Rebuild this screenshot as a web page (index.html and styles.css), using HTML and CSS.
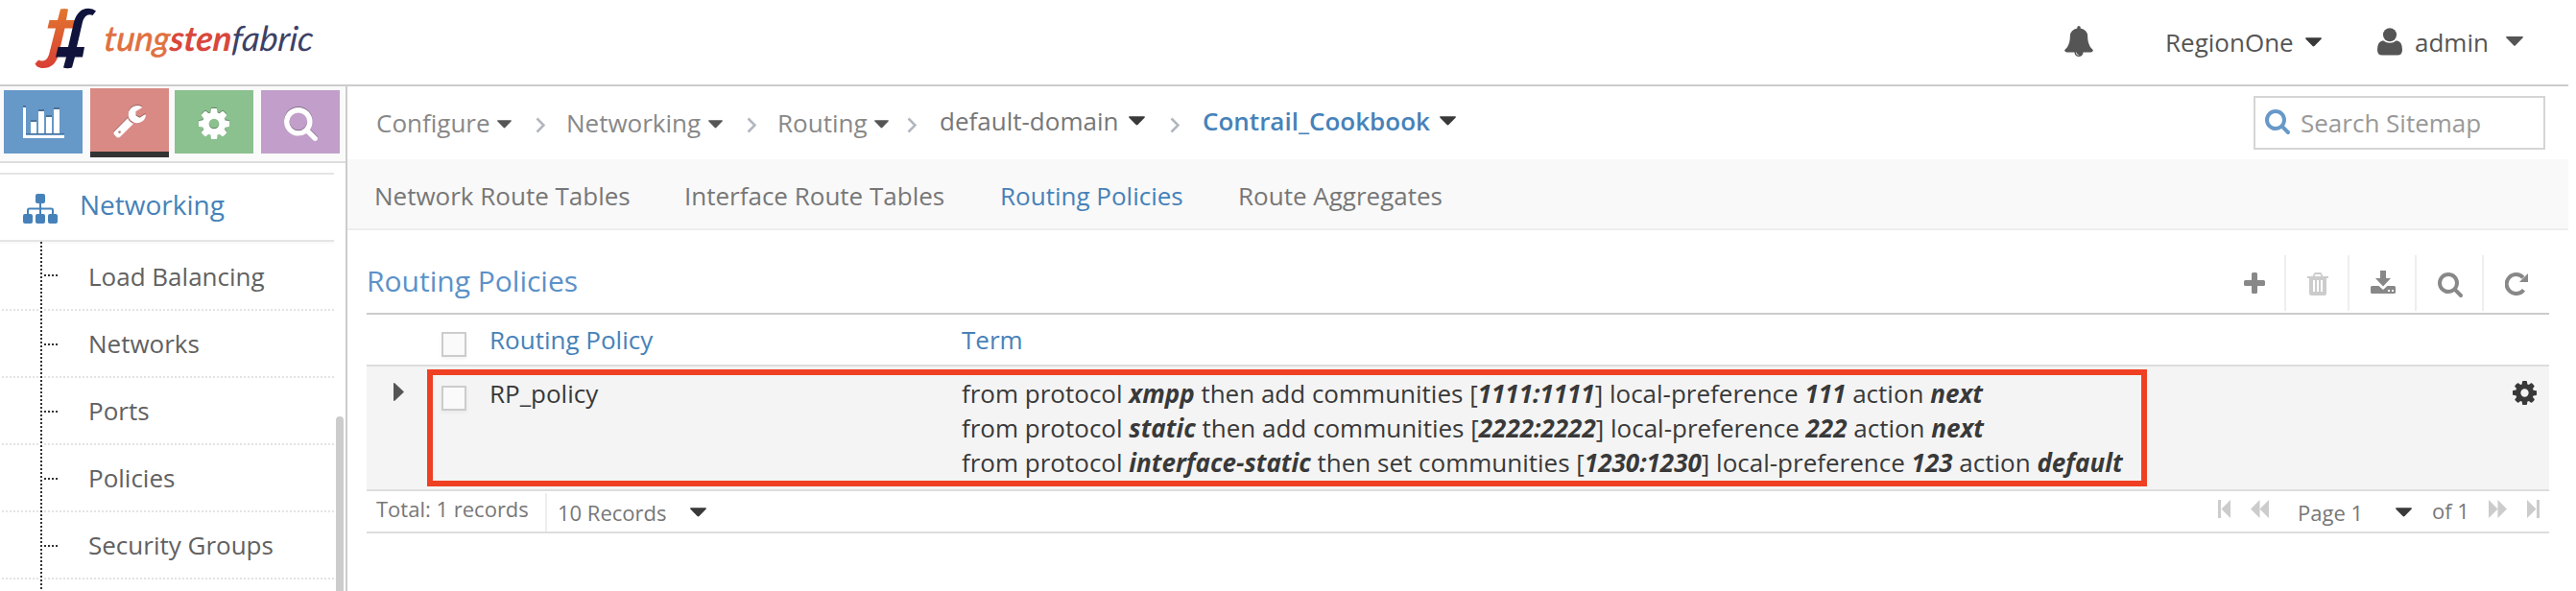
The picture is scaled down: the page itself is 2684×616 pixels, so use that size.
FILE: index.html
```html
<!DOCTYPE html>
<html lang="en">
<head>
<meta charset="utf-8">
<title>Routing Policies</title>
<link rel="stylesheet" href="styles.css">
</head>
<body>
<svg class="defs" width="0" height="0">
  <symbol id="cog" viewBox="128 128 1536 1536"><path d="M1152 896q0-106-75-181t-181-75-181 75-75 181 75 181 181 75 181-75 75-181zm512-109v222q0 12-8 23t-20 13l-185 28q-19 54-39 91 35 50 107 138 10 12 10 25t-9 23q-27 37-99 108t-94 71q-12 0-26-9l-138-108q-44 23-91 38-16 136-29 186-7 28-36 28h-222q-14 0-24.500-8.500t-11.500-21.500l-28-184q-49-16-90-37l-141 107q-10 9-25 9-14 0-25-11-126-114-165-168-7-10-7-23 0-12 8-23 15-21 51-66.500t54-70.500q-27-50-41-99l-183-27q-13-2-21-12.500t-8-23.500v-222q0-12 8-23t19-13l186-28q14-46 39-92-40-57-107-138-10-12-10-24 0-10 9-23 26-36 98.500-107.500t94.500-71.500q13 0 26 10l138 107q44-23 91-38 16-136 29-186 7-28 36-28h222q14 0 24.500 8.500t11.500 21.500l28 184q49 16 90 37l142-107q9-9 24-9 13 0 25 10 129 119 165 170 7 8 7 22 0 12-8 23-15 21-51 66.500t-54 70.500q26 50 41 98l183 28q13 2 21 12.500t8 23.500z"/></symbol>
  <symbol id="search" viewBox="64 128 1664 1664"><path d="M1216 832q0-185-131.500-316.500t-316.500-131.500-316.500 131.500-131.500 316.500 131.500 316.500 316.500 131.500 316.500-131.500 131.500-316.500zm512 832q0 52-38 90t-90 38q-54 0-90-38l-343-342q-179 124-399 124-143 0-273.500-55.500t-225-150-150-225-55.500-273.500 55.500-273.500 150-225 225-150 273.500-55.500 273.500 55.500 225 150 150 225 55.500 273.500q0 220-124 399l343 343q37 37 37 90z"/></symbol>
  <symbol id="wrench" viewBox="64 128 1664 1664"><path d="M448 1472q0-26-19-45t-45-19-45 19-19 45 19 45 45 19 45-19 19-45zm644-420l-682 682q-37 37-90 37-52 0-91-37l-106-108q-38-36-38-90 0-53 38-91l681-681q39 98 114.500 173.500t173.500 114.500zm634-435q0 39-23 106-47 134-164.500 217.500t-258.500 83.500q-185 0-316.500-131.500t-131.500-316.500 131.500-316.500 316.500-131.500q58 0 121.500 16.500t107.500 46.500q16 11 16 28t-16 28l-293 169v224l193 107q5-3 79-48.500t135.500-81 70.500-35.500q15 0 23.500 10t8.500 25z"/></symbol>
  <symbol id="bell" viewBox="64 0 1664 1792"><path d="M912 1696q0-16-16-16-59 0-101.500-42.500t-42.500-101.500q0-16-16-16t-16 16q0 73 51.500 124.500t124.500 51.500q16 0 16-16zm816-288q0 52-38 90t-90 38h-448q0 106-75 181t-181 75-181-75-75-181h-448q-52 0-90-38t-38-90q50-42 91-88t85-119.500 74.500-158.500 50-206 19.500-260q0-152 117-282.500t307-158.500q-8-19-8-39 0-40 28-68t68-28 68 28 28 68q0 20-8 39 190 28 307 158.500t117 282.500q0 139 19.500 260t50 206 74.500 158.500 85 119.500 91 88z"/></symbol>
  <symbol id="caret" viewBox="0 0 18 10"><path d="M.8 0H17.200Q18.400.4 17.500 1.500L10 9.300Q9 10.300 8 9.300L.5 1.500Q-.4.400.8 0z"/></symbol>
  <symbol id="chev" viewBox="0 0 10 17"><path d="M1.500 1.500L8.500 8.500L1.500 15.500" fill="none" stroke="#b2b6bf" stroke-width="2.600"/></symbol>
</svg>

<header class="topbar">
  <div class="logo">
    <svg class="mark" viewBox="0 0 66 66" width="66" height="66">
      <defs><linearGradient id="flame" x1="0" y1="0" x2="0" y2="1"><stop offset="0" stop-color="#e2762f"/><stop offset="1" stop-color="#d83f34"/></linearGradient></defs>
      <path fill="url(#flame)" d="M27 1.500Q31 .5 35 1.500L33 13H43L40.500 21.500H31.500L25 49Q21 64 7 63Q2 62 .5 58.500L4 54.500Q12 58 15 49L22 21.500H13.500L15.500 13H24z"/>
      <path fill="#10143c" d="M64 3.500L60.500 8Q53 5 50 15L44 41H52L50 51.500H42L39 62.500Q34 64 30 62.500L33 51.500H22L24.500 41H35L41 15Q45 1 56 .8Q61 1 64 3.500z"/>
    </svg>
    <span class="word"><span class="word-a">tung</span><span class="word-b">sten</span><span class="word-c">fabric</span></span>
  </div>
  <div class="account">
    <svg class="bell" width="30" height="32"><use href="#bell"/></svg>
    <span class="region">RegionOne</span><svg class="caret dark region-caret" width="17" height="10"><use href="#caret"/></svg>
    <svg class="user" viewBox="0 0 26 29" width="26" height="29"><circle cx="13" cy="7.300" r="7"/><path d="M6 13.200Q13 18.500 20 13.200Q26 14 26 23Q26 28.500 21 28.500H5Q0 28.500 0 23Q0 14 6 13.200z"/></svg>
    <span class="admin">admin</span><svg class="caret admin-caret" width="18" height="10"><use href="#caret"/></svg>
  </div>
</header>

<div class="shell">
  <aside class="sidebar">
    <div class="shortcuts">
      <a class="tile blue"><svg viewBox="0 0 43 34" width="43" height="34"><path class="under" d="M0 0H3V29H43V30H0zM8 15h6v3H8zM16 4h6v3h-6zM24 10h6v3h-6zM32 2h6v3h-6z"/><path d="M0 2H3V31H43V34H0zM8 17h6V29H8zM16 6h6V29h-6zM24 12h6V29h-6zM32 4h6V29h-6z"/></svg></a>
      <a class="tile red"><svg width="34" height="34"><use href="#wrench"/></svg></a>
      <a class="tile green"><svg width="32" height="32"><use href="#cog"/></svg></a>
      <a class="tile purple"><svg width="35" height="35"><use href="#search"/></svg></a>
    </div>
    <div class="section">
      <svg viewBox="0 0 36 31" width="36" height="31"><rect x="13" y="0" width="10" height="10" rx="2"/><rect x="0" y="21" width="10" height="10" rx="2"/><rect x="13" y="21" width="10" height="10" rx="2"/><rect x="26" y="21" width="10" height="10" rx="2"/><path d="M18 9V22M5 22V17Q5 15.500 6.500 15.500H29.500Q31 15.500 31 17V22" fill="none" stroke="#4682b9" stroke-width="2"/></svg>
      <span>Networking</span>
    </div>
    <ul class="menu">
      <li>Load Balancing</li><li>Networks</li><li>Ports</li><li>Policies</li><li>Security Groups</li>
    </ul>
    <div class="thumb"></div>
  </aside>

  <main class="main">
    <div class="crumbs">
      <span class="crumb c1">Configure</span><svg class="caret k1" width="15" height="9"><use href="#caret"/></svg><svg class="chev v1" width="10" height="17"><use href="#chev"/></svg>
      <span class="crumb c2">Networking</span><svg class="caret k1" width="15" height="9"><use href="#caret"/></svg><svg class="chev v1" width="10" height="17"><use href="#chev"/></svg>
      <span class="crumb c3">Routing</span><svg class="caret k1" width="15" height="9"><use href="#caret"/></svg><svg class="chev v3" width="10" height="17"><use href="#chev"/></svg>
      <span class="crumb up c4">default-domain</span><svg class="caret dark k4" width="17" height="10"><use href="#caret"/></svg><svg class="chev v4" width="10" height="17"><use href="#chev"/></svg>
      <span class="crumb up strong c5">Contrail_Cookbook</span><svg class="caret dark k4" width="17" height="10"><use href="#caret"/></svg>
      <div class="finder"><svg width="26" height="26"><use href="#search"/></svg><span>Search Sitemap</span></div>
    </div>
    <nav class="tabs">
      <a class="t1">Network Route Tables</a><a class="t2">Interface Route Tables</a><a class="t3 on">Routing Policies</a><a class="t4">Route Aggregates</a>
    </nav>
    <section class="grid">
      <div class="titlebar">
        <h1>Routing Policies</h1>
        <div class="tools">
          <span class="tool w1"><svg viewBox="0 0 22 22" width="22" height="22"><path d="M9.500 0h3a1.500 1.500 0 0 1 1.500 1.500V8h6.500A1.500 1.500 0 0 1 22 9.500v3a1.500 1.500 0 0 1-1.500 1.500H14v6.500a1.500 1.500 0 0 1-1.500 1.500h-3A1.500 1.500 0 0 1 8 20.500V14H1.500A1.500 1.500 0 0 1 0 12.500v-3A1.500 1.500 0 0 1 1.500 8H8V1.500A1.500 1.500 0 0 1 9.500 0z"/></svg></span>
          <span class="tool w2"><svg class="off" viewBox="0 0 22 24" width="22" height="24"><path fill-rule="evenodd" d="M0 4H5.500L7 1Q7.500 0 8.500 0H13.500Q14.500 0 15 1L16.500 4H22V6H20V21.500Q20 24 17.500 24H4.500Q2 24 2 21.500V6H0zM7.500 4H14.500L13.500 2H8.500zM6 8V20H8V8zM10 8V20H12V8zM14 8V20H16V8z"/></svg></span>
          <span class="tool w3"><svg viewBox="0 0 26 24" width="26" height="24"><path fill-rule="evenodd" d="M10 0H16V8H21L13 16.500L5 8H10zM1.500 16H8.500L13 20L17.500 16H24.500Q26 16 26 17.500V22.500Q26 24 24.500 24H1.500Q0 24 0 22.500V17.500Q0 16 1.500 16zM18 20V22H20V20zM22 20V22H24V20z"/></svg></span>
          <span class="tool w4"><svg width="26" height="26"><use href="#search"/></svg></span>
          <span class="tool w5"><svg viewBox="0 0 24 24" width="24" height="24"><path d="M19.500 18.200A10 10 0 1 1 19 5.300" fill="none" stroke="#888" stroke-width="4"/><path d="M24 1V10H15z"/></svg></span>
        </div>
      </div>
      <div class="row head"><span class="expand"></span><i class="check"></i><span class="name">Routing Policy</span><span class="term">Term</span></div>
      <div class="row item">
        <span class="expand"><svg viewBox="0 0 11 19" width="11" height="19"><path d="M0 0L1.500 .5L10.500 9Q11 9.500 10.500 10L1.500 18.500L0 19z"/></svg></span>
        <i class="check"></i><span class="name">RP_policy</span>
        <div class="term">
          <div>from protocol <b>xmpp</b> then add communities [<b>1111:1111</b>] local-preference <b>111</b> action <b>next</b></div>
          <div>from protocol <b>static</b> then add communities [<b>2222:2222</b>] local-preference <b>222</b> action <b>next</b></div>
          <div>from protocol <b>interface-static</b> then set communities [<b>1230:1230</b>] local-preference <b>123</b> action <b>default</b></div>
        </div>
        <svg class="gear" width="25" height="25"><use href="#cog"/></svg>
        <div class="highlight"></div>
      </div>
      <div class="foot">
        <span class="total">Total: 1 records</span>
        <span class="size">10 Records</span><svg class="caret dark size-caret" width="17" height="10"><use href="#caret"/></svg>
        <div class="pager">
          <svg class="pg p1" viewBox="0 0 13 19" width="13" height="19"><path d="M0 0H3V19H0zM13 0V19L3.500 9.500z"/></svg>
          <svg class="pg p2" viewBox="0 0 19 19" width="19" height="19"><path d="M9.500 0V19L0 9.500zM19 0V19L9.500 9.500z"/></svg>
          <span class="page">Page 1</span><svg class="caret dark page-caret" width="17" height="10"><use href="#caret"/></svg>
          <span class="of">of 1</span>
          <svg class="pg p3" viewBox="0 0 19 19" width="19" height="19"><path d="M0 0V19L9.500 9.500zM9.500 0V19L19 9.500z"/></svg>
          <svg class="pg p4" viewBox="0 0 13 19" width="13" height="19"><path d="M10 0H13V19H10zM0 0V19L9.500 9.500z"/></svg>
        </div>
      </div>
    </section>
  </main>
</div>
</body>
</html>
```
FILE: styles.css
```css
* { box-sizing: border-box; }
body {
  margin: 0; width: 2684px; height: 616px; overflow: hidden; background: #fff;
  font: 26px/36px "Open Sans", "Noto Sans", sans-serif; color: #393939;
  white-space: nowrap;
}
svg { display: block; flex: none; }
.defs { position: absolute; }
.caret { fill: #555; }
.caret.dark { fill: #393939; }

.topbar { width: 2676px; height: 90px; border-bottom: 2px solid #ccc; display: flex; justify-content: space-between; }
.logo { display: flex; padding: 8px 0 0 36px; }
.word { margin: 7px 0 0 6px; font: italic 400 36px/48px Lato, sans-serif; transform: skewX(-5deg); }
.word-a { color: #e07040; -webkit-text-stroke: .6px #e07040; }
.word-b { color: #d9473c; font-weight: 700; }
.word-c { color: #3d4166; }
.account { display: flex; color: #555; fill: #555; padding-right: 47px; }
.bell { margin: 27px 75px 0 0; }
.account span { margin-top: 26px; }
.region { width: 146px; }
.region-caret { margin: 39px 58px 0 0; }
.user { margin: 29px 13px 0 0; }
.admin { width: 95px; }
.admin-caret { margin-top: 38px; }

.shell { display: flex; height: 526px; }
.sidebar { width: 362px; border-right: 2px solid #ccc; position: relative; flex: none; }
.shortcuts { height: 80px; background: #fafafa; border-bottom: 2px solid #ddd; display: flex; padding: 4px 0 0 4px; }
.tile { width: 82px; height: 66px; display: flex; align-items: center; justify-content: center; fill: #fff; }
.tile svg { filter: drop-shadow(0 -1px 0 rgba(0,0,0,.3)); }
.blue { background: #6698c8; margin-right: 8px; }
.blue svg { filter: none; }
.under { fill: #4b7196; }
.red { background: #d98a85; height: 72px; margin: -2px 6px 0 0; border-bottom: 6px solid #333; }
.red svg { margin-top: 4px; }
.green { background: #8bc08f; margin-right: 8px; }
.green svg { margin-top: 3px; }
.purple { background: #c19fca; }
.purple svg { margin-top: 4px; }
.section { width: 348px; height: 72px; margin-top: 10px; border-top: 2px solid #e5e5e5; border-bottom: 2px solid #e5e5e5; display: flex; padding-left: 24px; color: #4682b9; fill: #4682b9; font-size: 28px; }
.section svg { margin: 20px 23px 0 0; }
.section span { margin-top: 13px; }
.menu { list-style: none; margin: 0; padding: 0; width: 348px; height: 364px; position: relative; color: #616161; }
.menu::before { content: ""; position: absolute; z-index: 1; left: 42px; top: 0; height: 364px; width: 2px; background: repeating-linear-gradient(#333 0 2px, #fff 2px 4px); }
.menu li { height: 70px; padding: 16px 0 0 92px; position: relative; background: repeating-linear-gradient(90deg, #fff 0 2px, #e3e3e3 2px 4px) 0 68px / 100% 2px no-repeat; }
.menu li:first-child { height: 72px; padding-top: 18px; background-position-y: 70px; box-shadow: inset 0 2px #f9f9f9; }
.menu li::before { content: ""; position: absolute; left: 46px; top: 34px; width: 14px; height: 2px; background: repeating-linear-gradient(90deg, #333 0 2px, #fff 2px 4px); }
.thumb { position: absolute; left: 350px; top: 344px; width: 8px; height: 182px; border-radius: 4px 4px 0 0; background: #ccc; }

.main { width: 2314px; flex: none; }
.crumbs { height: 76px; display: flex; padding-left: 30px; color: #888; }
.crumb { margin-top: 20px; }
.crumb.up { margin-top: 18px; color: #777; }
.crumb.strong { color: #4682b9; font-weight: 600; }
.c1 { width: 126px; }
.c2 { width: 148px; }
.c3 { width: 101px; }
.c4 { width: 197px; }
.c5 { width: 247px; }
.k1 { margin-top: 35px; }
.k4 { margin-top: 31px; }
.chev { margin-top: 32px; }
.v1 { margin-left: 25px; margin-right: 22px; }
.v3 { margin-left: 19px; margin-right: 24px; }
.v4 { margin-left: 26px; margin-right: 24px; }
.finder { margin: 10px 24px 0 auto; width: 304px; height: 56px; border: 2px solid #d5d5d5; display: flex; padding: 12px 0 0 10px; fill: #6699c9; color: #999; }
.finder span { margin: -4px 0 0 11px; }
.tabs { height: 74px; background: #f9f9f9; border-bottom: 2px solid #eee; display: flex; padding: 20px 0 0 28px; color: #777; }
.t1 { width: 323px; }
.t2 { width: 329px; }
.t3 { width: 248px; }
.tabs .on { color: #4682b9; }

.grid { margin-left: 20px; width: 2274px; }
.titlebar { height: 88px; border-bottom: 2px solid #ccc; display: flex; justify-content: space-between; }
h1 { margin: 33px 0 0; font-size: 30px; line-height: 40px; font-weight: 400; color: #5b91c8; }
.tools { display: flex; margin-top: 26px; height: 58px; fill: #888; padding-right: 22px; }
.tool { border-right: 2px solid #eee; }
.tool svg { margin-top: 18px; }
.w1 { width: 44px; }
.w2 { width: 66px; padding-left: 22px; }
.w3 { width: 70px; padding-left: 22px; }
.tools .w3 svg { margin-top: 16px; }
.w4 { width: 70px; padding-left: 22px; }
.w5 { padding-left: 22px; border: 0; }
.off { fill: #ccc; }
.row { display: flex; border-bottom: 2px solid #ddd; position: relative; }
.head { height: 54px; color: #4682b9; }
.item { height: 130px; background: #f4f4f4; }
.expand { width: 78px; flex: none; padding: 17px 0 0 28px; fill: #555; }
.check { width: 26px; height: 26px; margin-top: 18px; border: 2px solid #ccc; background: #fafafa; box-shadow: 0 2px 4px rgba(0,0,0,.05); flex: none; }
.item .check { margin-top: 20px; }
.name { width: 490px; margin: 8px 0 0 24px; }
.term { margin-top: 8px; margin-left: 2px; }
.item .name, .item .term { margin-top: 10px; }
.term b { font-style: italic; }
.gear { margin: 15px 13px 0 auto; fill: #393939; }
.highlight { position: absolute; left: 63px; top: 3px; width: 1792px; height: 122px; border: 6px solid #ef4023; }
.foot { height: 44px; border-bottom: 2px solid #ddd; display: flex; color: #777; font-size: 22px; line-height: 32px; padding-left: 10px; }
.total { width: 178px; height: 40px; margin-top: 2px; border-right: 2px solid #eee; }
.size { margin: 6px 0 0 11px; width: 138px; }
.size-caret { margin-top: 17px; }
.pager { display: flex; margin-left: auto; padding-right: 10px; }
.pg { fill: #ccc; margin-top: 9px; }
.p2 { margin-left: 21px; }
.page { margin: 6px 0 0 30px; width: 102px; }
.page-caret { margin-top: 17px; }
.of { margin: 4px 0 0 21px; width: 59px; }
.p4 { margin-left: 21px; }
```
